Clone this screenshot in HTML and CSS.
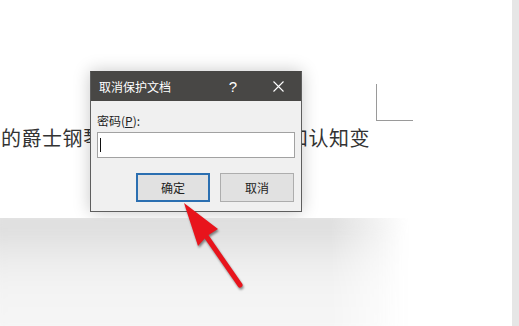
FILE: index.html
```html
<!DOCTYPE html>
<html lang="zh">
<head>
<meta charset="utf-8">
<title>取消保护文档</title>
<link rel="stylesheet" href="styles.css">
</head>
<body>
<div class="screen">
  <div class="page">
    <div class="doc">
      <p class="line">的爵士钢琴曲给人带来新的听觉和认知变</p>
      <span class="corner"></span>
      <div class="dialog">
        <div class="titlebar">
          <span class="title">取消保护文档</span>
          <span class="help">?</span>
          <span class="close">
            <svg width="11" height="11" viewBox="0 0 11 11"><path d="M0.5 0.5 L10.5 10.5 M10.5 0.5 L0.5 10.5" stroke="#fff" stroke-width="1.1" fill="none"/></svg>
          </span>
        </div>
        <div class="body">
          <div class="label">密码(<u>P</u>):</div>
          <div class="input"><span class="caret"></span></div>
          <div class="buttons">
            <div class="btn btn-ok">确定</div>
            <div class="btn btn-cancel">取消</div>
          </div>
        </div>
      </div>
    </div>
    <div class="gap"><div class="gap-shade"></div></div>
    <svg class="arrow" width="512" height="326" viewBox="0 0 512 326">
      <g class="arrow-shape">
        <line x1="206" y1="236" x2="240" y2="285" stroke="#e8141c" stroke-width="5" stroke-linecap="round"/>
        <polygon points="184,203 218,229 207,236 198,246" fill="#e8141c"/>
      </g>
    </svg>
  </div>
  <div class="scroll"></div>
</div>
</body>
</html>
```

FILE: styles.css
```css
html, body {
  margin: 0;
  padding: 0;
  background: #ffffff;
}

.screen {
  display: flex;
  width: 519px;
  height: 326px;
  overflow: hidden;
}

.page {
  position: relative;
  width: 512px;
  display: flex;
  flex-direction: column;
  background: #ffffff;
}

.doc {
  position: relative;
  height: 218px;
  padding-top: 124px;
  box-sizing: border-box;
}

.line {
  margin: 0;
  padding-left: 1px;
  font-family: "Noto Sans CJK SC", "Noto Sans", sans-serif;
  font-size: 20px;
  letter-spacing: 0.5px;
  line-height: 28px;
  color: #333333;
  white-space: nowrap;
}

.corner {
  position: absolute;
  left: 376px;
  top: 84px;
  width: 36px;
  height: 36px;
  border-left: 1px solid #9a9a9a;
  border-bottom: 1px solid #9a9a9a;
}

.dialog {
  position: absolute;
  left: 90px;
  top: 71px;
  width: 212px;
  height: 141px;
  box-sizing: border-box;
  border: 1px solid #5e5e5e;
  border-top-color: #474644;
  background: #f0f0f0;
  display: flex;
  flex-direction: column;
  box-shadow: 0 0 16px rgba(0, 0, 0, 0.22);
  font-family: "Noto Sans CJK SC", "Noto Sans", sans-serif;
}

.titlebar {
  height: 29px;
  background: #484745;
  display: flex;
  align-items: center;
  padding-left: 8px;
  color: #ffffff;
  font-size: 12px;
}

.title {
  flex: 1;
  line-height: 16px;
}

.help {
  width: 30px;
  margin-right: 7px;
  text-align: center;
  font-family: "Liberation Sans", sans-serif;
  font-size: 15px;
  line-height: 16px;
}

.close {
  width: 46px;
  display: flex;
  justify-content: center;
  align-items: center;
}

.body {
  padding: 12px 6px 0 6px;
  display: flex;
  flex-direction: column;
}

.label {
  font-size: 12px;
  line-height: 16px;
  color: #222222;
}

.input {
  margin-top: 3px;
  height: 26px;
  box-sizing: border-box;
  border: 1px solid #a2a2a2;
  background: #ffffff;
  display: flex;
  align-items: center;
  padding-left: 2px;
}

.caret {
  width: 1px;
  height: 14px;
  background: #111111;
}

.buttons {
  margin-top: 15px;
  margin-right: 1px;
  display: flex;
  justify-content: flex-end;
  gap: 10px;
}

.btn {
  width: 74px;
  height: 29px;
  box-sizing: border-box;
  background: #e1e1e1;
  display: flex;
  align-items: center;
  justify-content: center;
  font-size: 12px;
  color: #222222;
}

.btn-ok {
  border: 2px solid #2b6fb1;
}

.btn-cancel {
  border: 1px solid #adadad;
}

.gap {
  flex: 1;
  overflow: hidden;
  background: #ffffff;
}

.gap-shade {
  margin-left: -30px;
  margin-top: -12px;
  width: 440px;
  height: 150px;
  background: linear-gradient(to bottom, #d2d2d2 0%, #e6e6e6 25%, #f3f3f3 50%, #f7f7f7 100%);
  -webkit-mask-image: linear-gradient(to right, #000 0%, #000 82%, transparent 100%);
  mask-image: linear-gradient(to right, #000 0%, #000 82%, transparent 100%);
  filter: blur(14px);
}

.arrow {
  position: absolute;
  left: 0;
  top: 0;
  pointer-events: none;
}

.arrow-shape {
  filter: drop-shadow(1px 2px 1.2px rgba(0, 0, 0, 0.45));
}

.scroll {
  width: 7px;
  background: #e6e6e6;
}
```
